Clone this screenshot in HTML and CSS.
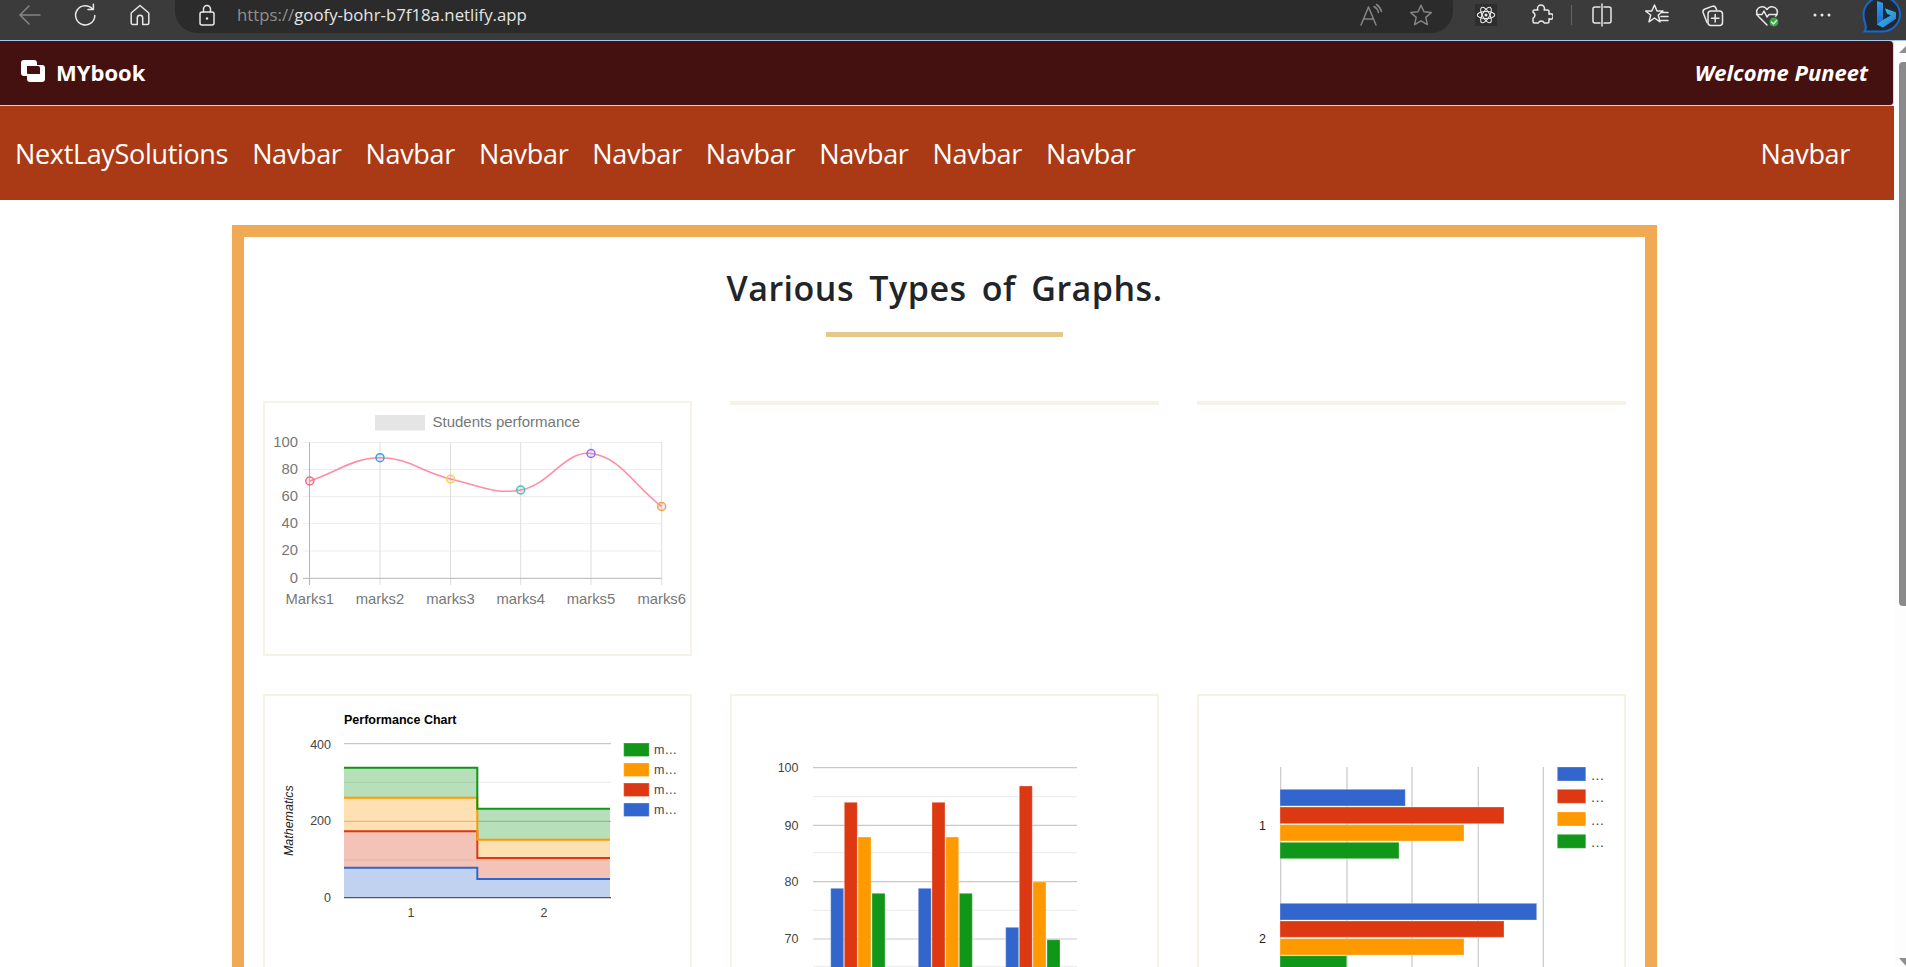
FILE: index.html
```html
<!DOCTYPE html>
<html lang="en">
<head>
    <meta charset="UTF-8">
    <title>MYbook</title>
    <link rel="stylesheet" href="styles.css">
</head>
<body>
    <!-- browser toolbar -->
    <div class="toolbar">
        <div class="tool tool-first">
            <svg class="ico dim" viewBox="0 0 24 24"><path d="M2 12h20M2 12l9-9M2 12l9 9"/></svg>
        </div>
        <div class="tool">
            <svg class="ico" viewBox="0 0 24 24"><path d="M19.6 6.2A9.6 9.6 0 1 0 21.8 12.4M20.4 1.2v5.4h-5.4"/></svg>
        </div>
        <div class="tool">
            <svg class="ico" viewBox="0 0 24 24"><path d="M12 2.5 3.2 10v10a1.5 1.5 0 0 0 1.5 1.5h4.6v-6.5a2.7 2.7 0 0 1 5.4 0v6.5h4.6a1.5 1.5 0 0 0 1.5-1.5V10z"/></svg>
        </div>
        <div class="address">
            <svg class="ico lock" viewBox="0 0 24 24"><rect x="5" y="9" width="14" height="13" rx="2"/><path d="M8.5 9V6a3.5 3.5 0 0 1 7 0v3"/><circle class="solid" cx="12" cy="15.5" r="1.2"/></svg>
            <span class="url"><span class="url-scheme">https://</span>goofy-bohr-b7f18a.netlify.app</span>
            <svg class="ico dim read" viewBox="0 0 24 24"><path d="M2 22 9.5 4 17 22M4.8 16h9.4M15 3.5a9 9 0 0 1 4.5 6M17.5 1.5a12 12 0 0 1 5 7"/></svg>
            <svg class="ico dim" viewBox="0 0 24 24"><path d="M12 2.2l3 6.6 7.2.8-5.4 4.8 1.6 7.2L12 17.8l-6.4 3.8 1.6-7.2L1.800 9.600 9 8.800z"/></svg>
        </div>
        <div class="tool tool-atom">
            <svg class="ico atom" viewBox="0 0 24 24">
                <ellipse cx="12" cy="12" rx="10.500" ry="4.300"/>
                <ellipse cx="12" cy="12" rx="10.500" ry="4.300" transform="rotate(60 12 12)"/>
                <ellipse cx="12" cy="12" rx="10.500" ry="4.300" transform="rotate(120 12 12)"/>
                <circle class="solid" cx="12" cy="12" r="1.800"/>
            </svg>
        </div>
        <div class="tool">
            <svg class="ico" viewBox="0 0 24 24"><path d="M8.500 5.500a3.500 3.500 0 0 1 7 0c0 .8-.4 1.200-.4 1.500h3.400a1.500 1.500 0 0 1 1.500 1.500v2.800c.4-.3 1-.5 1.500-.5a2.700 2.700 0 0 1 0 5.400c-.5 0-1.100-.2-1.500-.5v2.800a1.500 1.500 0 0 1-1.500 1.500h-3.200c-.6-1.300-1.800-2-3-2s-2.400.7-3 2H5.500A1.500 1.500 0 0 1 4 18.500v-3.300c1.300-.5 2-1.700 2-2.900s-.7-2.400-2-3V8.500A1.500 1.500 0 0 1 5.500 7h3.400c0-.3-.4-.7-.4-1.500z"/></svg>
        </div>
        <div class="divider"></div>
        <div class="tool">
            <svg class="ico" viewBox="0 0 24 24"><path d="M10 4H5a2 2 0 0 0-2 2v12a2 2 0 0 0 2 2h5M14 4h5a2 2 0 0 1 2 2v12a2 2 0 0 1-2 2h-5M12 1v22"/></svg>
        </div>
        <div class="tool">
            <svg class="ico" viewBox="0 0 24 24"><path d="M9.500 2l2.500 6h6l-4.700 4 1.700 6.800-5.500-3.800-5.500 3.800 1.700-6.800L.5 8h6.300zM16 9.500h7M16 13.500h7M16 17.500h7"/></svg>
        </div>
        <div class="tool">
            <svg class="ico" viewBox="0 0 24 24"><path d="M7 19.500 3.200 9.800A3 3 0 0 1 5 6L12 3.400a3 3 0 0 1 3.800 1.500l.9 2.100"/><rect x="8" y="8" width="14.500" height="14.500" rx="3"/><path d="M15.200 11.500v7.500M11.500 15.200H19"/></svg>
        </div>
        <div class="tool tool-heart">
            <svg class="ico heart" viewBox="0 0 24 24">
                <path d="M12 22 3.500 13.500C1 11 1 7 3.500 5c2.800-2.300 6.500-1.500 8.500 1.500C14 3.500 17.700 2.700 20.500 5c2.500 2 2.500 6 0 8.500"/>
                <path d="M1.500 11.500h5.500l2-3.500 3 6 2-2.500h8"/>
                <circle class="badge" cx="19" cy="19" r="5"/>
                <path class="tick" d="M16.500 19l2 2 3-3.500"/>
            </svg>
        </div>
        <div class="tool">
            <svg class="ico dots" viewBox="0 0 24 24"><circle cx="5" cy="12" r="1.500"/><circle cx="12" cy="12" r="1.500"/><circle cx="19" cy="12" r="1.500"/></svg>
        </div>
        <div class="tool tool-bing">
            <svg class="bing" viewBox="0 0 40 36">
                <defs>
                    <linearGradient id="bingA" x1="0" y1="0" x2="0" y2="1"><stop offset="0" stop-color="#2f9df0"/><stop offset="1" stop-color="#1a62c8"/></linearGradient>
                    <linearGradient id="bingB" x1="0" y1="0" x2="1" y2="1"><stop offset="0" stop-color="#35d6d8"/><stop offset="1" stop-color="#2a6fe0"/></linearGradient>
                </defs>
                <path class="bing-shell" d="M20 -1C30 -1 38 7 38 16.500 38 26 30 33.500 20 33.500H2.500C4.500 31 4 28 3 25 2 22 1.500 19 1.500 16.500 1.500 7 10 -1 20 -1z"/>
                <path fill="url(#bingA)" d="M15 3l6 2v17l8-4.500-4-2-2-5 11 4v6l-13 9-6-3z"/>
                <path fill="url(#bingB)" d="M21 22l8-4.500-4-2-2-5 11 4v6l-13 9-6-3z"/>
            </svg>
        </div>
    </div>

    <div class="viewport">
        <div class="page">
            <div class="topbar">
                <div class="brand">
                    <svg class="brand-icon" viewBox="0 0 24 22"><path fill-rule="evenodd" d="M3 0h10a3 3 0 0 1 3 3v2h5a3 3 0 0 1 3 3v11a3 3 0 0 1-3 3H9a3 3 0 0 1-3-3v-3H3a3 3 0 0 1-3-3V3a3 3 0 0 1 3-3zM6 6v7a1 1 0 0 0 1 1h12V8a2 2 0 0 0-2-2z"/></svg>
                    <span>MYbook</span>
                </div>
                <div class="welcome">Welcome Puneet</div>
            </div>

            <nav class="navbar">
                <a class="nav-brand">NextLaySolutions</a>
                <a class="nav-link">Navbar</a>
                <a class="nav-link">Navbar</a>
                <a class="nav-link">Navbar</a>
                <a class="nav-link">Navbar</a>
                <a class="nav-link">Navbar</a>
                <a class="nav-link">Navbar</a>
                <a class="nav-link">Navbar</a>
                <a class="nav-link">Navbar</a>
                <a class="nav-link nav-end">Navbar</a>
            </nav>

            <div class="frame">
                <h2 class="heading">Various Types of Graphs.</h2>
                <div class="heading-rule"></div>

                <div class="graphs">
                    <div class="graph">
                        <svg class="chart-short" viewBox="265 403 425 251">
                            <rect x="375" y="415" width="50" height="15.500" fill="#e5e5e5"/>
                            <text class="cj cj-legend" x="432.500" y="427.200">Students performance</text>
                            <g class="cj-grid">
                                <path d="M303 442.500H661.700M303 469.500H661.700M303 496.700H661.700M303 523.700H661.700M303 551H661.700"/>
                                <path class="cj-vert" d="M380 442.500V585M450.500 442.500V585M520.700 442.500V585M591 442.500V585M661.700 442.500V585"/>
                            </g>
                            <path d="M303 578.300H661.700M309.500 442.500V585" fill="none" stroke="#b5b5b5" stroke-width="1"/>
                            <path d="M309.800 481C337.900 471.700 351.900 458.100 380 457.700C408.100 457.300 421.800 472.400 450.500 479C478.100 485.300 494.100 494.800 520.700 490C550.300 484.600 564.400 450.400 591 453.500C620.800 457 633.400 485.300 661.700 506.500" fill="none" stroke="#ff8da5" stroke-width="1.600"/>
                            <circle class="pt" cx="309.800" cy="481" r="4" stroke="#ff6384"/>
                            <circle class="pt" cx="380" cy="457.700" r="4" stroke="#36a2eb"/>
                            <circle class="pt" cx="450.500" cy="479" r="4" stroke="#ffce56"/>
                            <circle class="pt" cx="520.700" cy="490" r="4" stroke="#4bc0c0"/>
                            <circle class="pt" cx="591" cy="453.500" r="4" stroke="#9966ff"/>
                            <circle class="pt" cx="661.700" cy="506.500" r="4" stroke="#ff9f40"/>
                            <g class="cj end">
                                <text x="298" y="446.500">100</text>
                                <text x="298" y="473.500">80</text>
                                <text x="298" y="500.700">60</text>
                                <text x="298" y="527.700">40</text>
                                <text x="298" y="555">20</text>
                                <text x="298" y="583">0</text>
                            </g>
                            <g class="cj mid">
                                <text x="309.800" y="604">Marks1</text>
                                <text x="380" y="604">marks2</text>
                                <text x="450.500" y="604">marks3</text>
                                <text x="520.700" y="604">marks4</text>
                                <text x="591" y="604">marks5</text>
                                <text x="661.700" y="604">marks6</text>
                            </g>
                        </svg>
                    </div>
                    <div class="graph graph-empty"></div>
                    <div class="graph graph-empty"></div>

                    <div class="graph">
                        <svg class="chart-tall" viewBox="265 696 425 300">
                            <text class="gc-title" x="344" y="724">Performance Chart</text>
                            <path class="gc-major" d="M344 743.700H611M344 821.300H611"/>
                            <path class="gc-minor" d="M344 782.300H611M344 860H611"/>
                            <path fill="#3366cc" opacity=".3" d="M344 867.700H477.300V879H610V897.500H344z"/>
                            <path fill="#dc3912" opacity=".3" d="M344 831.300H477.300V858H610V879H477.300V867.700H344z"/>
                            <path fill="#ff9900" opacity=".3" d="M344 797.700H477.300V839.700H610V858H477.300V831.300H344z"/>
                            <path fill="#109618" opacity=".3" d="M344 767.700H477.300V808.700H610V839.700H477.300V797.700H344z"/>
                            <path class="gc-line" stroke="#3366cc" d="M344 867.700H477.300V879H610"/>
                            <path class="gc-line" stroke="#dc3912" d="M344 831.300H477.300V858H610"/>
                            <path class="gc-line" stroke="#ff9900" d="M344 797.700H477.300V839.700H610"/>
                            <path class="gc-line" stroke="#109618" d="M344 767.700H477.300V808.700H610"/>
                            <path d="M344 897.700H611" stroke="#555" stroke-width="1.200"/>
                            <g class="gc end">
                                <text x="331" y="749">400</text>
                                <text x="331" y="824.500">200</text>
                                <text x="331" y="902">0</text>
                            </g>
                            <text class="gc gc-axis mid" transform="translate(293 820.700) rotate(-90)">Mathematics</text>
                            <g class="gc mid">
                                <text x="411" y="917">1</text>
                                <text x="544" y="917">2</text>
                            </g>
                            <rect class="bar" x="623.700" y="743" width="25.500" height="13.500" fill="#109618"/>
                            <rect class="bar" x="623.700" y="763" width="25.500" height="13.500" fill="#ff9900"/>
                            <rect class="bar" x="623.700" y="783" width="25.500" height="13.500" fill="#dc3912"/>
                            <rect class="bar" x="623.700" y="803" width="25.500" height="13.500" fill="#3366cc"/>
                            <g class="gc">
                                <text x="654" y="754">m…</text>
                                <text x="654" y="774">m…</text>
                                <text x="654" y="794">m…</text>
                                <text x="654" y="814">m…</text>
                            </g>
                        </svg>
                    </div>

                    <div class="graph">
                        <svg class="chart-tall" viewBox="732 696 425 300">
                            <path class="gc-major" d="M813 767.700H1077M813 825.300H1077M813 881.700H1077M813 939H1077"/>
                            <path class="gc-minor" d="M813 796.700H1077M813 852.700H1077M813 910.300H1077M813 966.300H1077"/>
                            <g class="gc end">
                                <text x="798.500" y="772">100</text>
                                <text x="798.500" y="829.500">90</text>
                                <text x="798.500" y="886">80</text>
                                <text x="798.500" y="942.500">70</text>
                            </g>
                            <rect class="bar" x="830.700" y="888.300" width="13" height="110" fill="#3366cc"/>
                            <rect class="bar" x="844.300" y="802.300" width="13" height="190" fill="#dc3912"/>
                            <rect class="bar" x="858" y="837" width="13" height="160" fill="#ff9900"/>
                            <rect class="bar" x="872" y="893.300" width="13" height="100" fill="#109618"/>
                            <rect class="bar" x="918.300" y="888.300" width="13" height="110" fill="#3366cc"/>
                            <rect class="bar" x="932" y="802.300" width="13" height="190" fill="#dc3912"/>
                            <rect class="bar" x="945.700" y="837" width="13" height="160" fill="#ff9900"/>
                            <rect class="bar" x="959.300" y="893.300" width="13" height="100" fill="#109618"/>
                            <rect class="bar" x="1005.700" y="927.300" width="13" height="70" fill="#3366cc"/>
                            <rect class="bar" x="1019.300" y="786" width="13" height="210" fill="#dc3912"/>
                            <rect class="bar" x="1033" y="882" width="13" height="110" fill="#ff9900"/>
                            <rect class="bar" x="1047" y="939.700" width="13" height="60" fill="#109618"/>
                        </svg>
                    </div>

                    <div class="graph">
                        <svg class="chart-tall" viewBox="1199 696 425 300">
                            <path class="gc-major" d="M1280.700 767V996M1347 767V996M1412 767V996M1478.300 767V996M1543.300 767V996"/>
                            <rect class="bar" x="1280" y="789.300" width="125.300" height="16.700" fill="#3366cc"/>
                            <rect class="bar" x="1280" y="807" width="224" height="16.700" fill="#dc3912"/>
                            <rect class="bar" x="1280" y="824.700" width="184" height="16.300" fill="#ff9900"/>
                            <rect class="bar" x="1280" y="842.300" width="119" height="16.400" fill="#109618"/>
                            <rect class="bar" x="1280" y="903.300" width="256.700" height="16.700" fill="#3366cc"/>
                            <rect class="bar" x="1280" y="921" width="224" height="16.300" fill="#dc3912"/>
                            <rect class="bar" x="1280" y="938.700" width="184" height="16.300" fill="#ff9900"/>
                            <rect class="bar" x="1280" y="955.700" width="66.700" height="16.300" fill="#109618"/>
                            <g class="gc gc-dark end">
                                <text x="1266" y="830">1</text>
                                <text x="1266" y="942.500">2</text>
                            </g>
                            <rect class="bar" x="1557.300" y="767" width="28.500" height="14" fill="#3366cc"/>
                            <rect class="bar" x="1557.300" y="789.300" width="28.500" height="14" fill="#dc3912"/>
                            <rect class="bar" x="1557.300" y="812" width="28.500" height="14" fill="#ff9900"/>
                            <rect class="bar" x="1557.300" y="834.300" width="28.500" height="14" fill="#109618"/>
                            <g class="gc gc-more">
                                <text x="1590.500" y="780">…</text>
                                <text x="1590.500" y="802">…</text>
                                <text x="1590.500" y="825">…</text>
                                <text x="1590.500" y="847">…</text>
                            </g>
                        </svg>
                    </div>
                </div>
            </div>
        </div>

        <div class="scrollbar">
            <div class="arrow-up"></div>
            <div class="thumb"></div>
            <div class="arrow-down"></div>
        </div>
    </div>
</body>
</html>
```

FILE: styles.css
```css
* {
    box-sizing: border-box;
}

html, body {
    margin: 0;
    height: 100%;
    overflow: hidden;
}

body {
    display: flex;
    flex-direction: column;
    font-family: "Open Sans", "Noto Sans", Arial, sans-serif;
    background-color: #fff;
}

/* browser toolbar */
.toolbar {
    flex: 0 0 41px;
    display: flex;
    align-items: flex-start;
    background-color: #3b3b3b;
    border-bottom: 1.5px solid #a9c9ec;
    overflow: hidden;
}

.tool {
    flex: 0 0 55px;
    height: 29px;
    display: flex;
    align-items: center;
    justify-content: center;
}

.tool-first {
    margin-left: 2px;
}

.tool-atom {
    margin-left: 6px;
}

.ico {
    width: 24px;
    height: 24px;
    flex: none;
    fill: none;
    stroke: #e8e8e8;
    stroke-width: 1.500;
    stroke-linecap: round;
    stroke-linejoin: round;
}

.ico.dim {
    stroke: #858585;
}

.ico .solid {
    fill: #e8e8e8;
    stroke: none;
}

.address {
    flex: 1;
    height: 33px;
    margin-left: 8px;
    padding: 0 20px 4px 20px;
    display: flex;
    align-items: center;
    background-color: #2b2b2b;
    border-radius: 0 0 22px 22px;
}

.url {
    flex: 1;
    margin-left: 18px;
    font-size: 16.800px;
    color: #e4e4e4;
}

.url-scheme {
    color: #909090;
}

.read {
    margin-right: 26px;
}

.atom {
    width: 20px;
    height: 20px;
    background-color: #2e2e2e;
    box-sizing: content-box;
    padding: 1px;
    stroke-width: 1.300;
}

.divider {
    flex: 0 0 1.500px;
    height: 20px;
    margin: 5px 2px 0 2px;
    background-color: #666;
}

.heart .badge {
    fill: #3fa64a;
    stroke: #3b3b3b;
    stroke-width: 1;
}

.heart .tick {
    stroke-width: 1.300;
    stroke: #d8f2da;
}

.dots {
    fill: #e8e8e8;
    stroke: none;
}

.tool-bing {
    flex-basis: 57px;
    height: 40px;
    align-items: flex-start;
    padding-left: 8px;
}

.bing {
    width: 40px;
    height: 36px;
    margin-top: -2px;
    flex: none;
    overflow: visible;
}

.bing-shell {
    fill: #23282e;
    stroke: #1668cc;
    stroke-width: 2;
}

/* page */
.viewport {
    flex: 1;
    min-height: 0;
    display: flex;
}

.page {
    flex: 1;
    min-width: 0;
    overflow: hidden;
}

.topbar {
    height: 65px;
    padding: 0 25px 2px 21px;
    display: flex;
    align-items: center;
    justify-content: space-between;
    background-color: #451110;
    border-right: 1px solid #c9d9ee;
    border-bottom: 1px solid #c9d9ee;
    border-bottom-right-radius: 4px;
    border-top-right-radius: 4px;
}

.brand {
    display: flex;
    align-items: center;
    font-size: 22px;
    font-weight: 700;
    color: #fff;
    gap: 11px;
}

.brand-icon {
    width: 24px;
    height: 22px;
    margin-top: -3px;
    fill: #fff;
}

.welcome {
    font-size: 22px;
    font-weight: 700;
    font-style: italic;
    color: #fff;
}

.navbar {
    height: 94px;
    padding: 0 44px 0 15px;
    display: flex;
    align-items: center;
    gap: 24px;
    background-color: #aa3a15;
    color: #fff;
    font-size: 27px;
    letter-spacing: -0.33px;
}

.nav-end {
    margin-left: auto;
}

.frame {
    width: 1425px;
    margin: 25px 0 0 232px;
    padding: 27px 19px 40px;
    border: 12px solid #f0aa53;
}

.heading {
    margin: 0;
    font-size: 34px;
    line-height: 48px;
    font-weight: 600;
    text-align: center;
    word-spacing: 6px;
    letter-spacing: 0.5px;
    color: #212529;
}

.heading-rule {
    width: 237px;
    height: 5px;
    margin: 20px auto 64px;
    background-color: #e6c98a;
}

.graphs {
    display: grid;
    grid-template-columns: repeat(3, 429px);
    gap: 38px;
    align-items: start;
}

.graph {
    border: 2px solid #f7f2e6;
}

.graph-empty {
    height: 4px;
}

.graph svg {
    display: block;
    width: 425px;
}

.chart-short {
    height: 251px;
}

.chart-tall {
    height: 300px;
}

/* chart text and marks */
.cj {
    font-family: "Liberation Sans", Arial, sans-serif;
    font-size: 14.800px;
    fill: #777;
}

.cj-legend {
    font-size: 15px;
}

.cj-grid path {
    fill: none;
    stroke: #ececec;
    stroke-width: 1;
}

.cj-grid .cj-vert {
    stroke: #dedede;
}

.pt {
    fill: rgba(150, 150, 150, 0.15);
    stroke-width: 1.500;
}

.gc {
    font-family: "Liberation Sans", Arial, sans-serif;
    font-size: 12.500px;
    fill: #444;
}

.gc-dark {
    fill: #222;
}

.gc-more {
    font-size: 14px;
}

.gc-axis {
    font-style: italic;
    fill: #222;
}

.gc-title {
    font-family: "Liberation Sans", Arial, sans-serif;
    font-size: 12.500px;
    font-weight: 700;
    fill: #000;
}

.gc-major {
    fill: none;
    stroke: #c9c9c9;
    stroke-width: 1.200;
}

.gc-minor {
    fill: none;
    stroke: #ebebeb;
    stroke-width: 1;
}

.gc-line {
    fill: none;
    stroke-width: 2;
}

.bar {
    stroke: #fff;
    stroke-opacity: 0.3;
    stroke-width: 1;
}

.end {
    text-anchor: end;
}

.mid {
    text-anchor: middle;
}

/* scrollbar */
.scrollbar {
    flex: 0 0 12px;
    padding: 4px 0 0 5px;
    display: flex;
    flex-direction: column;
    align-items: flex-start;
    overflow: hidden;
    background-color: #fdfdfd;
}

.arrow-up {
    border-left: 8px solid transparent;
    border-right: 8px solid transparent;
    border-bottom: 8px solid #8f8f8f;
}

.thumb {
    width: 7px;
    height: 544px;
    margin-top: 9px;
    background-color: #8a8a8a;
    border-radius: 4px 0 0 4px;
}

.arrow-down {
    margin-top: auto;
    border-left: 8px solid transparent;
    border-right: 8px solid transparent;
    border-top: 9px solid #8f8f8f;
}
```
